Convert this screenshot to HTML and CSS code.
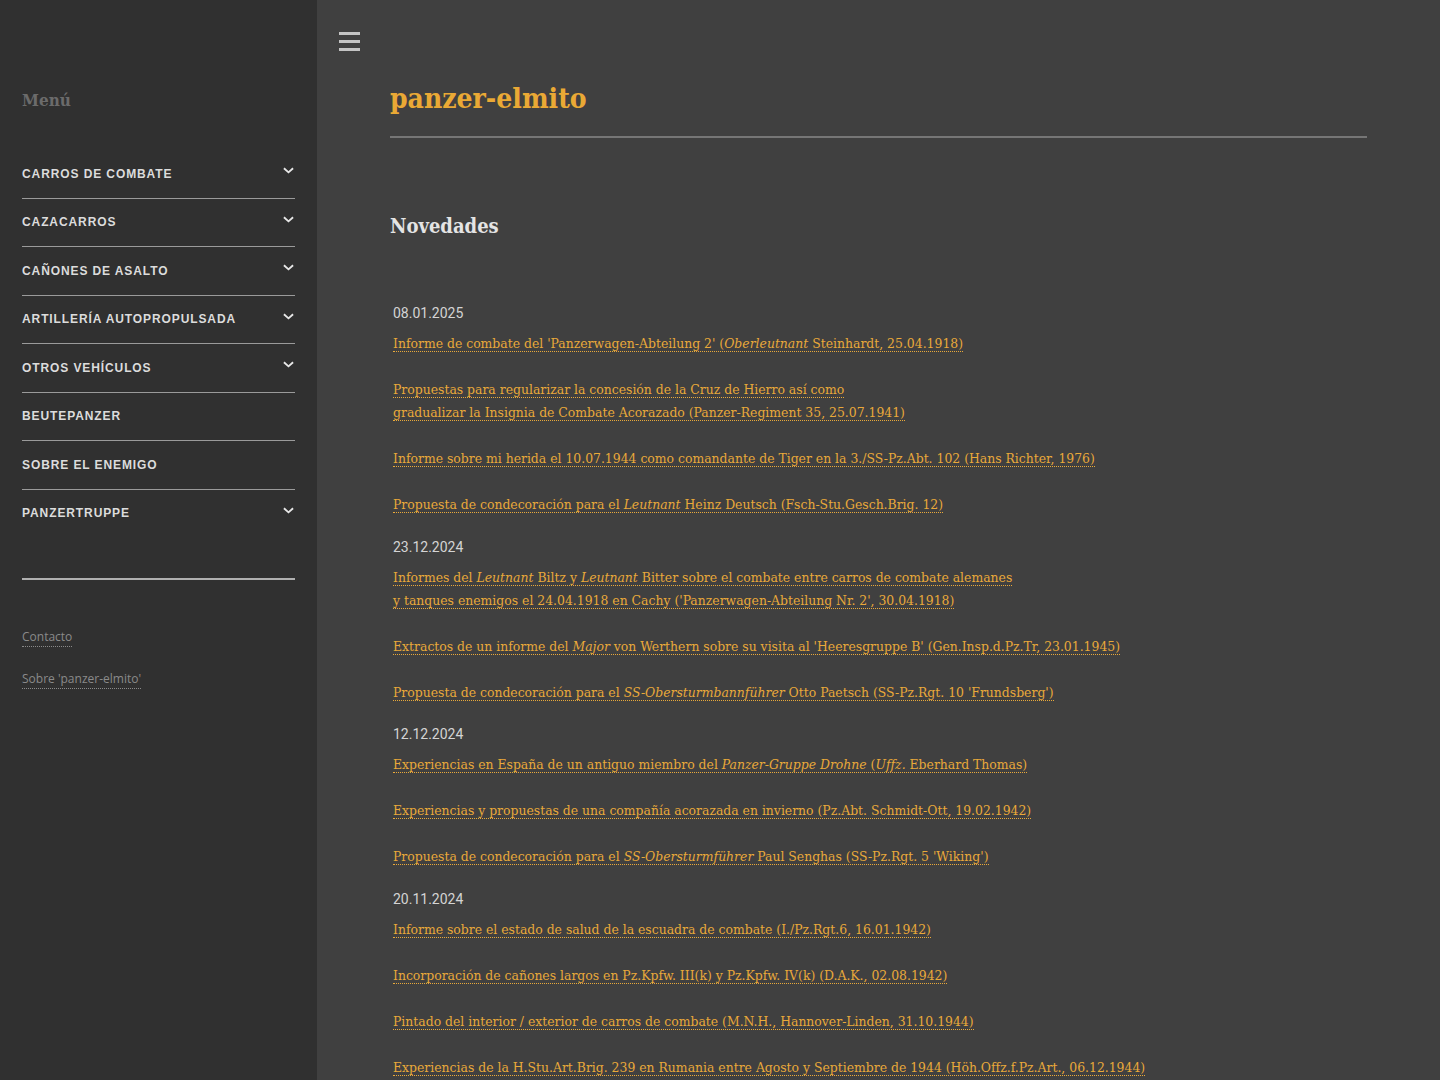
FILE: index.html
```html
<!DOCTYPE html>
<html lang="es">
<head>
    <meta charset="UTF-8">
    <meta name="viewport" content="width=device-width, initial-scale=1.0">
    <title>panzer-elmito</title>
    <link rel="stylesheet" href="styles.css">
</head>
<body>
    <div class="page">
        <aside class="sidebar">
            <div class="menu-title">Menú</div>
            <ul class="menu">
                <li class="menu-item">Carros de combate <svg class="chevron" viewBox="0 0 12 7"><polyline points="1,1 6,5.5 11,1"/></svg></li>
                <li class="menu-item">Cazacarros <svg class="chevron" viewBox="0 0 12 7"><polyline points="1,1 6,5.5 11,1"/></svg></li>
                <li class="menu-item">Cañones de asalto <svg class="chevron" viewBox="0 0 12 7"><polyline points="1,1 6,5.5 11,1"/></svg></li>
                <li class="menu-item">Artillería autopropulsada <svg class="chevron" viewBox="0 0 12 7"><polyline points="1,1 6,5.5 11,1"/></svg></li>
                <li class="menu-item">Otros vehículos <svg class="chevron" viewBox="0 0 12 7"><polyline points="1,1 6,5.5 11,1"/></svg></li>
                <li class="menu-item">Beutepanzer</li>
                <li class="menu-item">Sobre el enemigo</li>
                <li class="menu-item">Panzertruppe <svg class="chevron" viewBox="0 0 12 7"><polyline points="1,1 6,5.5 11,1"/></svg></li>
            </ul>
            <div class="side-links">
                <a href="#">Contacto</a>
                <a href="#">Sobre 'panzer-elmito'</a>
            </div>
        </aside>

        <main class="main">
            <div class="toggle">
                <span></span><span></span><span></span>
            </div>
            <div class="content">
                <h1 class="site-title">panzer-elmito</h1>
                <h2 class="section-title">Novedades</h2>

                <div class="news">
                    <div class="news-day">
                        <div class="news-date">08.01.2025</div>
                        <p><a href="#">Informe de combate del 'Panzerwagen-Abteilung 2' (<em>Oberleutnant</em> Steinhardt, 25.04.1918)</a></p>
                        <p><a href="#">Propuestas para regularizar la concesión de la Cruz de Hierro así como</a><br><a href="#">gradualizar la Insignia de Combate Acorazado (Panzer-Regiment 35, 25.07.1941)</a></p>
                        <p><a href="#">Informe sobre mi herida el 10.07.1944 como comandante de Tiger en la 3./SS-Pz.Abt. 102 (Hans Richter, 1976)</a></p>
                        <p><a href="#">Propuesta de condecoración para el <em>Leutnant</em> Heinz Deutsch (Fsch-Stu.Gesch.Brig. 12)</a></p>
                    </div>
                    <div class="news-day">
                        <div class="news-date">23.12.2024</div>
                        <p><a href="#">Informes del <em>Leutnant</em> Biltz y <em>Leutnant</em> Bitter sobre el combate entre carros de combate alemanes</a><br><a href="#">y tanques enemigos el 24.04.1918 en Cachy ('Panzerwagen-Abteilung Nr. 2', 30.04.1918)</a></p>
                        <p><a href="#">Extractos de un informe del <em>Major</em> von Werthern sobre su visita al 'Heeresgruppe B' (Gen.Insp.d.Pz.Tr, 23.01.1945)</a></p>
                        <p><a href="#">Propuesta de condecoración para el <em>SS-Obersturmbannführer</em> Otto Paetsch (SS-Pz.Rgt. 10 'Frundsberg')</a></p>
                    </div>
                    <div class="news-day">
                        <div class="news-date">12.12.2024</div>
                        <p><a href="#">Experiencias en España de un antiguo miembro del <em>Panzer-Gruppe Drohne</em> (<em>Uffz.</em> Eberhard Thomas)</a></p>
                        <p><a href="#">Experiencias y propuestas de una compañía acorazada en invierno (Pz.Abt. Schmidt-Ott, 19.02.1942)</a></p>
                        <p><a href="#">Propuesta de condecoración para el <em>SS-Obersturmführer</em> Paul Senghas (SS-Pz.Rgt. 5 'Wiking')</a></p>
                    </div>
                    <div class="news-day">
                        <div class="news-date">20.11.2024</div>
                        <p><a href="#">Informe sobre el estado de salud de la escuadra de combate (I./Pz.Rgt.6, 16.01.1942)</a></p>
                        <p><a href="#">Incorporación de cañones largos en Pz.Kpfw. III(k) y Pz.Kpfw. IV(k) (D.A.K., 02.08.1942)</a></p>
                        <p><a href="#">Pintado del interior / exterior de carros de combate (M.N.H., Hannover-Linden, 31.10.1944)</a></p>
                        <p><a href="#">Experiencias de la H.Stu.Art.Brig. 239 en Rumania entre Agosto y Septiembre de 1944 (Höh.Offz.f.Pz.Art., 06.12.1944)</a></p>
                    </div>
                </div>
            </div>
        </main>
    </div>
</body>
</html>
```

FILE: styles.css
```css
* {
    box-sizing: border-box;
    margin: 0;
    padding: 0;
}

html, body {
    height: 100%;
}

body {
    font-family: "DejaVu Serif", serif;
    font-stretch: condensed;
    background-color: #404040;
    color: #e0e0e0;
    overflow: hidden;
}

.page {
    display: flex;
    min-height: 100%;
}

/* Sidebar */

.sidebar {
    width: 317px;
    flex-shrink: 0;
    background: #303030;
    padding: 88px 22px 0 22px;
}

.menu-title {
    font-weight: bold;
    font-size: 17px;
    line-height: 24px;
    color: #6b6b6b;
    margin-bottom: 38px;
}

.menu {
    list-style: none;
}

.menu-item {
    position: relative;
    font-family: "Liberation Sans", Arial, sans-serif;
    font-stretch: normal;
    font-weight: bold;
    font-size: 12px;
    line-height: 14px;
    letter-spacing: 0.9px;
    text-transform: uppercase;
    color: #dcdcdc;
    padding: 16.75px 0;
    border-bottom: 1px solid #9a9a9a;
}

.menu-item:last-child {
    padding-bottom: 58px;
    border-bottom: 2px solid #b0b0b0;
}

.chevron {
    position: absolute;
    right: 1px;
    top: 17px;
    width: 11px;
    height: 7px;
    fill: none;
    stroke: #e8e8e8;
    stroke-width: 2;
}

.side-links {
    padding-top: 47px;
    display: flex;
    flex-direction: column;
    align-items: flex-start;
    gap: 22px;
}

.side-links a {
    font-family: "Open Sans", "DejaVu Sans", sans-serif;
    font-stretch: normal;
    font-size: 12px;
    line-height: 19px;
    color: #8a8a8a;
    text-decoration: none;
    border-bottom: 1px dotted #8a8a8a;
}

/* Main */

.main {
    flex: 1;
    background: #404040;
    position: relative;
}

.toggle {
    position: absolute;
    left: 22px;
    top: 32px;
    width: 21px;
    display: flex;
    flex-direction: column;
    gap: 5px;
}

.toggle span {
    display: block;
    height: 3px;
    background: #c4c4c4;
}

.content {
    padding: 80px 73px 0 73px;
}

.site-title {
    font-size: 28px;
    line-height: 38px;
    font-weight: bold;
    color: #eaa935;
    padding-bottom: 18px;
    border-bottom: 2px solid #767676;
}

.section-title {
    font-size: 20px;
    line-height: 28px;
    font-weight: bold;
    color: #e4e4e4;
    margin-top: 74px;
}

.news {
    margin-top: 62px;
    padding: 0 3px;
}

.news-day {
    margin-bottom: 19.7px;
}

.news-date {
    font-family: Roboto, "Liberation Sans", sans-serif;
    font-stretch: normal;
    font-size: 14px;
    line-height: 23px;
    color: #d4d4d4;
    margin-bottom: 7px;
}

.news p {
    font-size: 13.8px;
    line-height: 23px;
    margin-bottom: 23px;
}

.news p:last-child {
    margin-bottom: 0;
}

.news a {
    color: #e9a93a;
    text-decoration: none;
    border-bottom: 1px dotted #e9a93a;
}
```
